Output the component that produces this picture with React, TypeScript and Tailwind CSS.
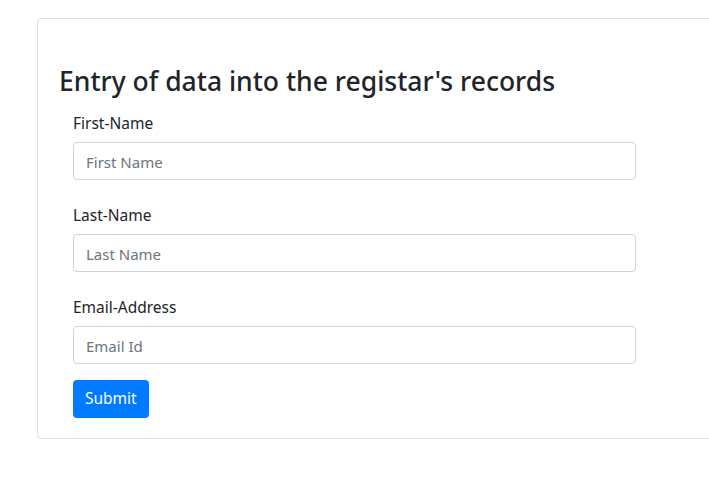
import React, { useState } from 'react';

const fields = [
  { name: 'first', label: 'First-Name', placeholder: 'First Name', type: 'text' },
  { name: 'last', label: 'Last-Name', placeholder: 'Last Name', type: 'text' },
  { name: 'email', label: 'Email-Address', placeholder: 'Email Id', type: 'email' },
];

const App: React.FC = () => {
  const [values, setValues] = useState<Record<string, string>>({ first: '', last: '', email: '' });

  const handleSubmit = (e: React.FormEvent) => {
    e.preventDefault();
  };

  return (
    <div className="w-[709px] h-[486px] overflow-hidden bg-white font-['Noto_Sans',sans-serif] text-[#212529]">
      <div className="ml-[37px] mt-[18px] w-[720px] border border-[#dfdfdf] rounded-[4px] pl-[21px] pt-[45px] pb-[20px]">
        <h3 className="text-[26.5px] leading-[34px] font-medium mb-[13px]">Entry of data into the registar's records</h3>
        <form onSubmit={handleSubmit} className="pl-[14px] w-[577px]">
          {fields.map((f, i) => (
            <div key={f.name} className={i === 0 ? '' : 'mt-[23px]'}>
              <label className="block text-[15.5px] leading-[24px] mb-[7px]">{f.label}</label>
              <input
                type={f.type}
                placeholder={f.placeholder}
                value={values[f.name]}
                onChange={e => setValues({ ...values, [f.name]: e.target.value })}
                className="block w-[563px] h-[38px] px-[12px] pt-[1px] text-[15px] border border-[#ced4da] rounded-[4px] outline-none placeholder:text-[#6c757d]"
              />
            </div>
          ))}
          <button
            type="submit"
            className="mt-[16px] h-[38px] px-[12px] bg-[#007bff] text-white text-[15.5px] rounded-[4px]"
          >
            Submit
          </button>
        </form>
      </div>
    </div>
  );
};

export default App;
